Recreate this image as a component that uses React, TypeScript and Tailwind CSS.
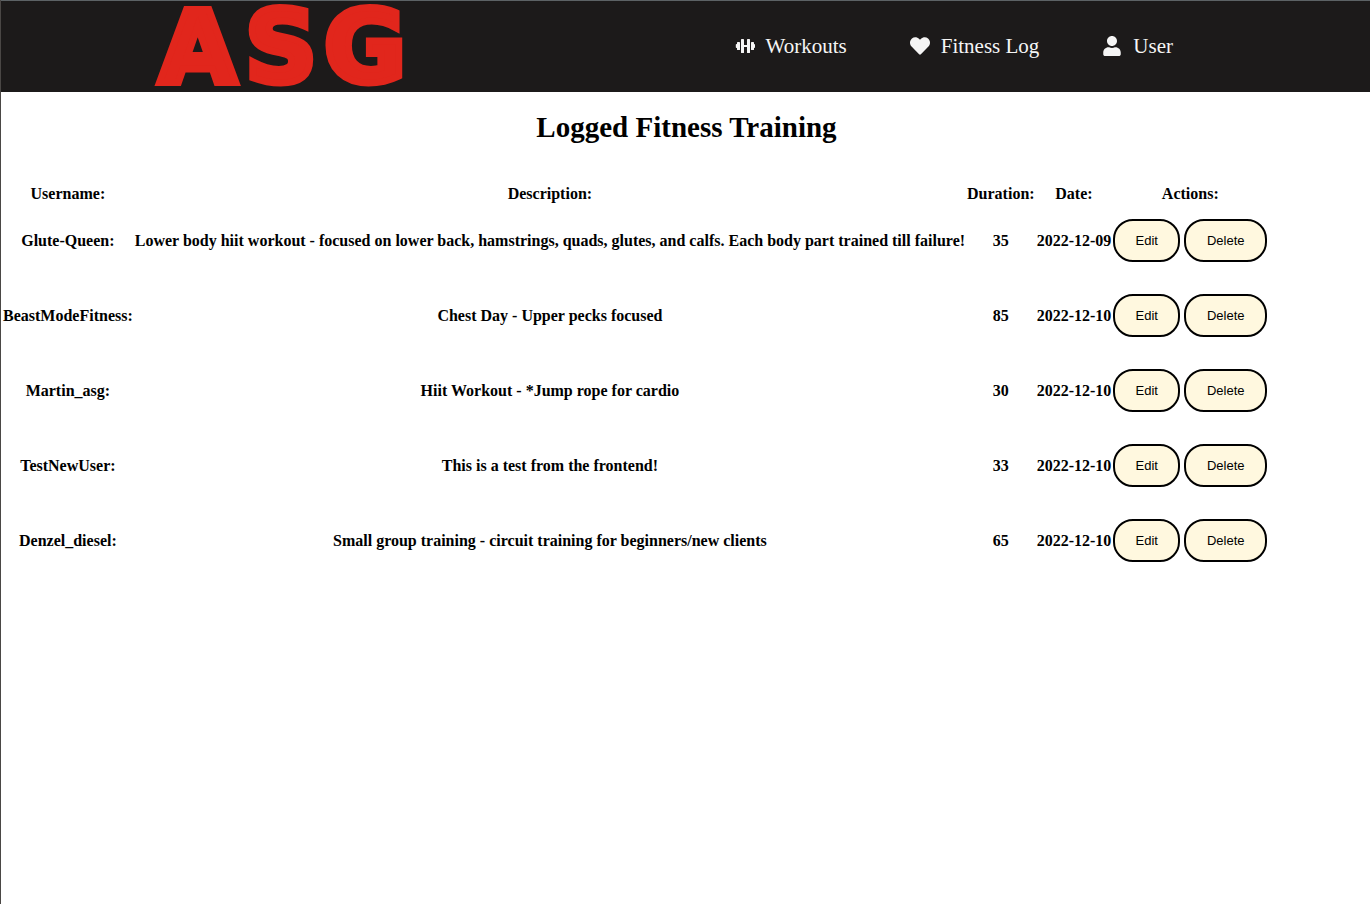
import { FaHeart, FaUser } from "react-icons/fa";

type Log = {
  username: string;
  description: string;
  duration: number;
  date: string;
};

const logs: Log[] = [
  {
    username: "Glute-Queen",
    description:
      "Lower body hiit workout - focused on lower back, hamstrings, quads, glutes, and calfs. Each body part trained till failure!",
    duration: 35,
    date: "2022-12-09",
  },
  { username: "BeastModeFitness", description: "Chest Day - Upper pecks focused", duration: 85, date: "2022-12-10" },
  { username: "Martin_asg", description: "Hiit Workout - *Jump rope for cardio", duration: 30, date: "2022-12-10" },
  { username: "TestNewUser", description: "This is a test from the frontend!", duration: 33, date: "2022-12-10" },
  {
    username: "Denzel_diesel",
    description: "Small group training - circuit training for beginners/new clients",
    duration: 65,
    date: "2022-12-10",
  },
];

function Logo() {
  return (
    <svg
      viewBox="0 0 254 90"
      className="h-[90px] w-[254px] overflow-visible font-['DejaVu_Sans',Verdana,sans-serif] text-[100px] font-bold"
      fill="#e1261c"
      stroke="#e1261c"
      strokeWidth="7"
    >
      <text x="7 93 172" y="80">
        ASG
      </text>
    </svg>
  );
}

function BarbellIcon() {
  return (
    <svg viewBox="0 0 20 20" className="size-5" fill="currentColor" aria-hidden="true">
      <rect x="0.8" y="8" width="2" height="4" rx="0.8" />
      <rect x="2" y="6" width="3" height="8" rx="0.6" />
      <rect x="6" y="3" width="3" height="14" rx="0.6" />
      <rect x="8" y="9" width="5" height="2" />
      <rect x="12" y="3" width="3" height="14" rx="0.6" />
      <rect x="16" y="6" width="3" height="8" rx="0.6" />
      <rect x="18" y="8" width="2" height="4" rx="0.8" />
    </svg>
  );
}

const linkClass = "flex items-center gap-[11px]";
const headClass = "p-0 pt-[2px] leading-4";
const buttonClass =
  "h-[43px] rounded-[20px] border-2 border-black bg-[#fff8df] font-['Liberation_Sans',Arial,sans-serif] text-[13px] leading-[15px] font-normal text-black";

export default function App() {
  return (
    <div className="min-h-screen border-l border-[#4a4745] bg-white font-['Liberation_Serif','Times_New_Roman',serif] text-black">
      <header className="flex h-[92px] items-center justify-between border-t border-[#5c6265] bg-[#1c1a1a] pr-[197px] pl-[151px]">
        <a href="#home">
          <Logo />
        </a>
        <nav className="flex items-center gap-[63px] pb-[2px] text-[21px] leading-6 text-[#f5f5f5]">
          <a href="#workouts" className={linkClass}>
            <BarbellIcon />
            Workouts
          </a>
          <a href="#log" className={linkClass}>
            <FaHeart className="size-5" />
            Fitness Log
          </a>
          <a href="#user" className={linkClass}>
            <FaUser className="size-5" />
            User
          </a>
        </nav>
      </header>

      <main>
        <h1 className="pt-[18px] pl-[2px] text-center text-[29px] leading-[34px] font-bold">Logged Fitness Training</h1>
        <table className="mt-[38px] border-separate border-spacing-[2px] text-center text-[16px] leading-[18px] font-bold">
          <thead>
            <tr>
              <th className={headClass}>Username:</th>
              <th className={headClass}>Description:</th>
              <th className={headClass}>Duration:</th>
              <th className={headClass}>Date:</th>
              <th className={headClass}>Actions:</th>
            </tr>
          </thead>
          <tbody>
            {logs.map((log) => (
              <tr key={log.username} className="h-[73px]">
                <th scope="row" className="p-0">
                  {log.username}:
                </th>
                <td className="p-0">{log.description}</td>
                <td className="p-0">{log.duration}</td>
                <td className="p-0 whitespace-nowrap">{log.date}</td>
                <td className="p-0">
                  <div className="flex gap-1">
                    <button type="button" className={`${buttonClass} w-[67px]`}>
                      Edit
                    </button>
                    <button type="button" className={`${buttonClass} w-[83px]`}>
                      Delete
                    </button>
                  </div>
                </td>
              </tr>
            ))}
          </tbody>
        </table>
      </main>
    </div>
  );
}
